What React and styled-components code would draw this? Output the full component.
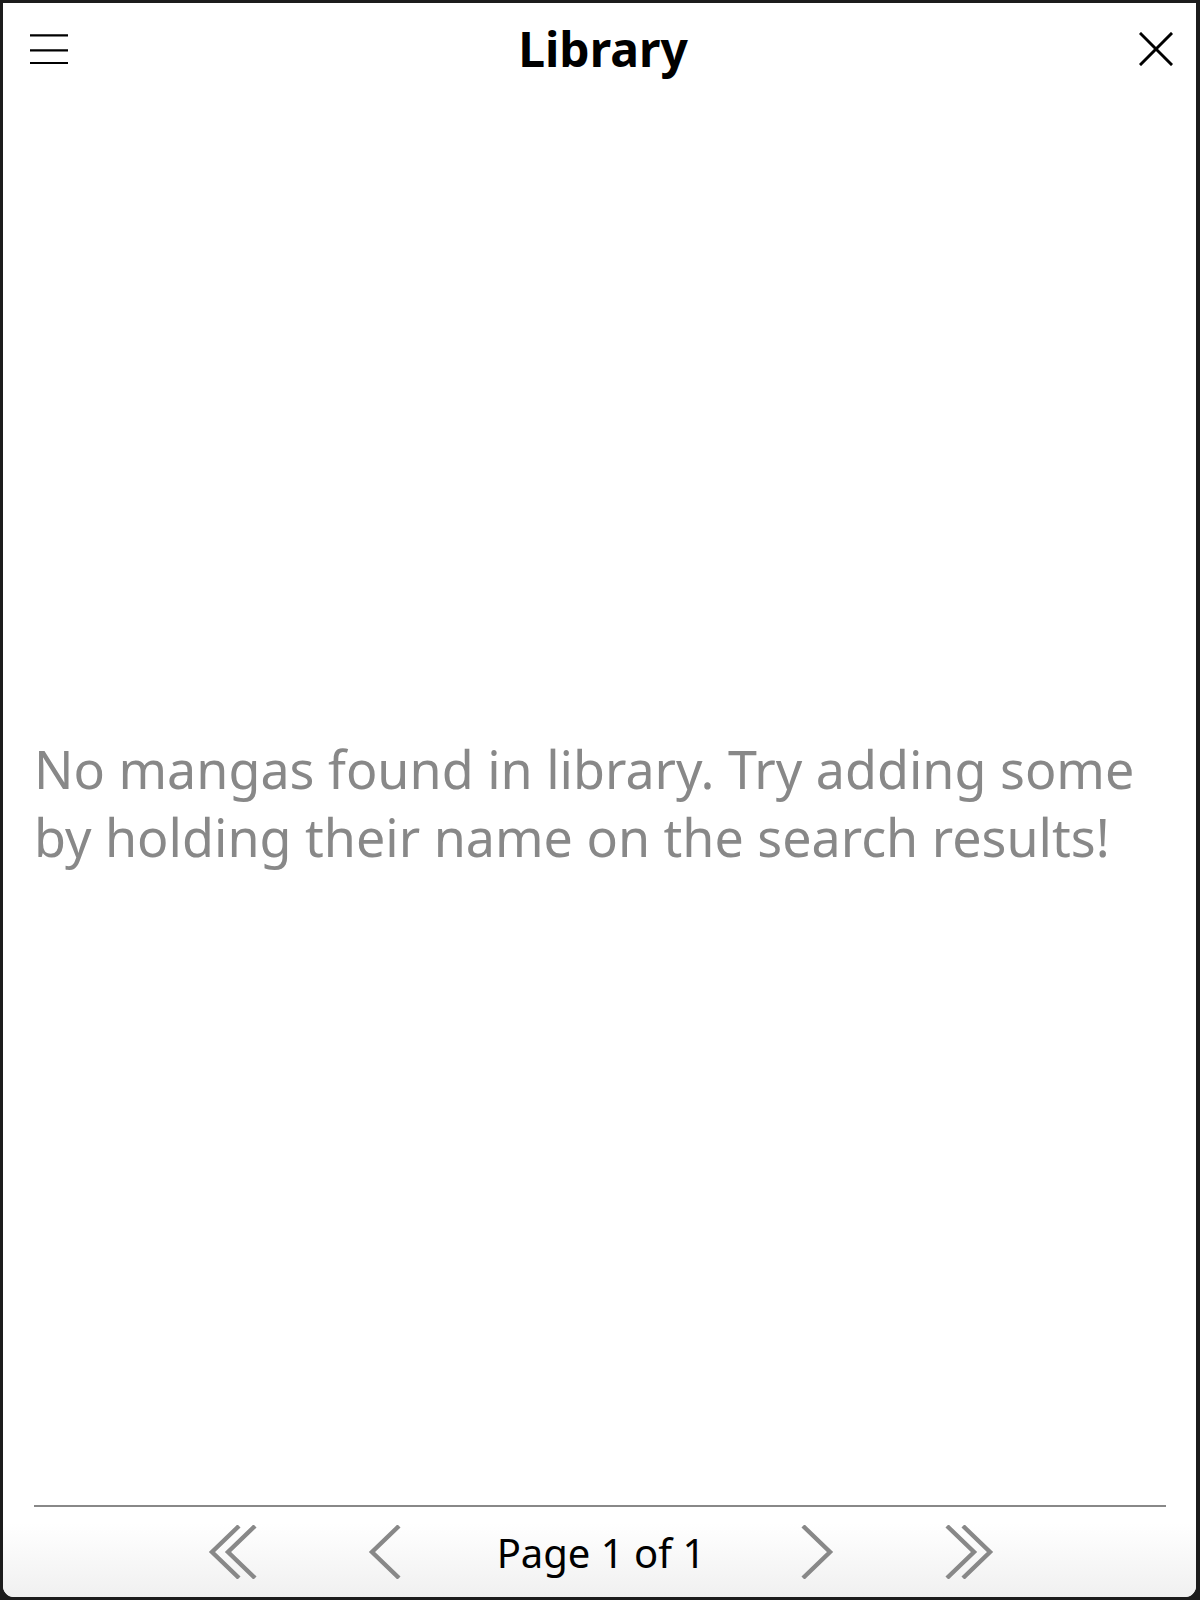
import React from "react";
import styled, { createGlobalStyle } from "styled-components";

const GlobalStyle = createGlobalStyle`
  html, body {
    margin: 0;
    padding: 0;
    background: #1c1c1c;
    font-family: "Noto Sans", "Open Sans", sans-serif;
  }
`;

const Hamburger = () => (
  <svg width="38" height="30" viewBox="0 0 38 30">
    <g stroke="#000" strokeWidth="2.2">
      <line x1="0" y1="1.3" x2="38" y2="1.3" />
      <line x1="0" y1="16.3" x2="38" y2="16.3" />
      <line x1="0" y1="29" x2="38" y2="29" />
    </g>
  </svg>
);

const CloseIcon = () => (
  <svg width="34" height="34" viewBox="0 0 34 34">
    <g stroke="#000" strokeWidth="3" strokeLinecap="square">
      <line x1="2" y1="2" x2="32" y2="32" />
      <line x1="32" y1="2" x2="2" y2="32" />
    </g>
  </svg>
);

// chevrons for the pager, drawn pointing left and mirrored for right
const Chevron = ({ double, flip }) => (
  <svg
    width={double ? 50 : 34}
    height="54"
    viewBox={double ? "0 0 50 54" : "0 0 34 54"}
    style={{ transform: flip ? "scaleX(-1)" : "none" }}
  >
    <g fill="none" stroke="#888" strokeWidth="4.4">
      {double ? (
        <>
          <polyline points="31,1 4,27 31,53" />
          <polyline points="47,1 20,27 47,53" />
        </>
      ) : (
        <polyline points="31,1 4,27 31,53" />
      )}
    </g>
  </svg>
);

const App = () => {
  return (
    <>
      <GlobalStyle />
      <Window>
        <Header>
          <IconButton side="left">
            <Hamburger />
          </IconButton>
          <Title>Library</Title>
          <IconButton side="right">
            <CloseIcon />
          </IconButton>
        </Header>

        <Content>
          <EmptyText>
            No mangas found in library. Try adding some by holding their name
            on the search results!
          </EmptyText>
        </Content>

        <Footer>
          <Divider />
          <Pager>
            <PageButton>
              <Chevron double />
            </PageButton>
            <PageButton>
              <Chevron />
            </PageButton>
            <PageLabel>Page 1 of 1</PageLabel>
            <PageButton>
              <Chevron flip />
            </PageButton>
            <PageButton>
              <Chevron double flip />
            </PageButton>
          </Pager>
        </Footer>
      </Window>
    </>
  );
};

export default App;

const Window = styled.div`
  display: flex;
  flex-direction: column;
  box-sizing: border-box;

  margin: 3px 4px 0 3px;
  height: 1594px;

  background: #fff;
  border-radius: 0 0 11px 11px;
  overflow: hidden;
`;

const Header = styled.div`
  display: grid;
  grid-template-columns: 1fr auto 1fr;
  align-items: center;

  height: 97px;
  padding: 0 23px 6px 27px;
  box-sizing: border-box;
`;

const IconButton = styled.div`
  display: flex;
  justify-content: ${(p) => (p.side === "right" ? "flex-end" : "flex-start")};
  align-items: center;
`;

const Title = styled.h1`
  margin: 0;
  padding: 1px 0 0 3px;
  font-size: 48px;
  font-weight: 700;
  color: #000;
  line-height: 1;
`;

const Content = styled.div`
  flex: 1;
  display: flex;
  align-items: center;

  padding: 0 40px 0 31px;
`;

const EmptyText = styled.p`
  margin: 0;
  font-size: 52px;
  line-height: 68px;
  color: #888;
`;

const Footer = styled.div`
  display: flex;
  flex-direction: column;
  background: linear-gradient(to bottom, #fff 0%, #fff 20%, #f0f0f0 100%);
`;

const Divider = styled.div`
  height: 2px;
  margin: 0 30px 0 31px;
  background: #888;
`;

const Pager = styled.div`
  display: flex;
  justify-content: center;
  align-items: center;
  height: 90px;
  padding-left: 3px;
`;

const PageButton = styled.div`
  width: 152px;
  display: flex;
  justify-content: center;
  align-items: center;
`;

const PageLabel = styled.div`
  width: 280px;
  text-align: center;
  font-size: 40px;
  color: #000;
`;
